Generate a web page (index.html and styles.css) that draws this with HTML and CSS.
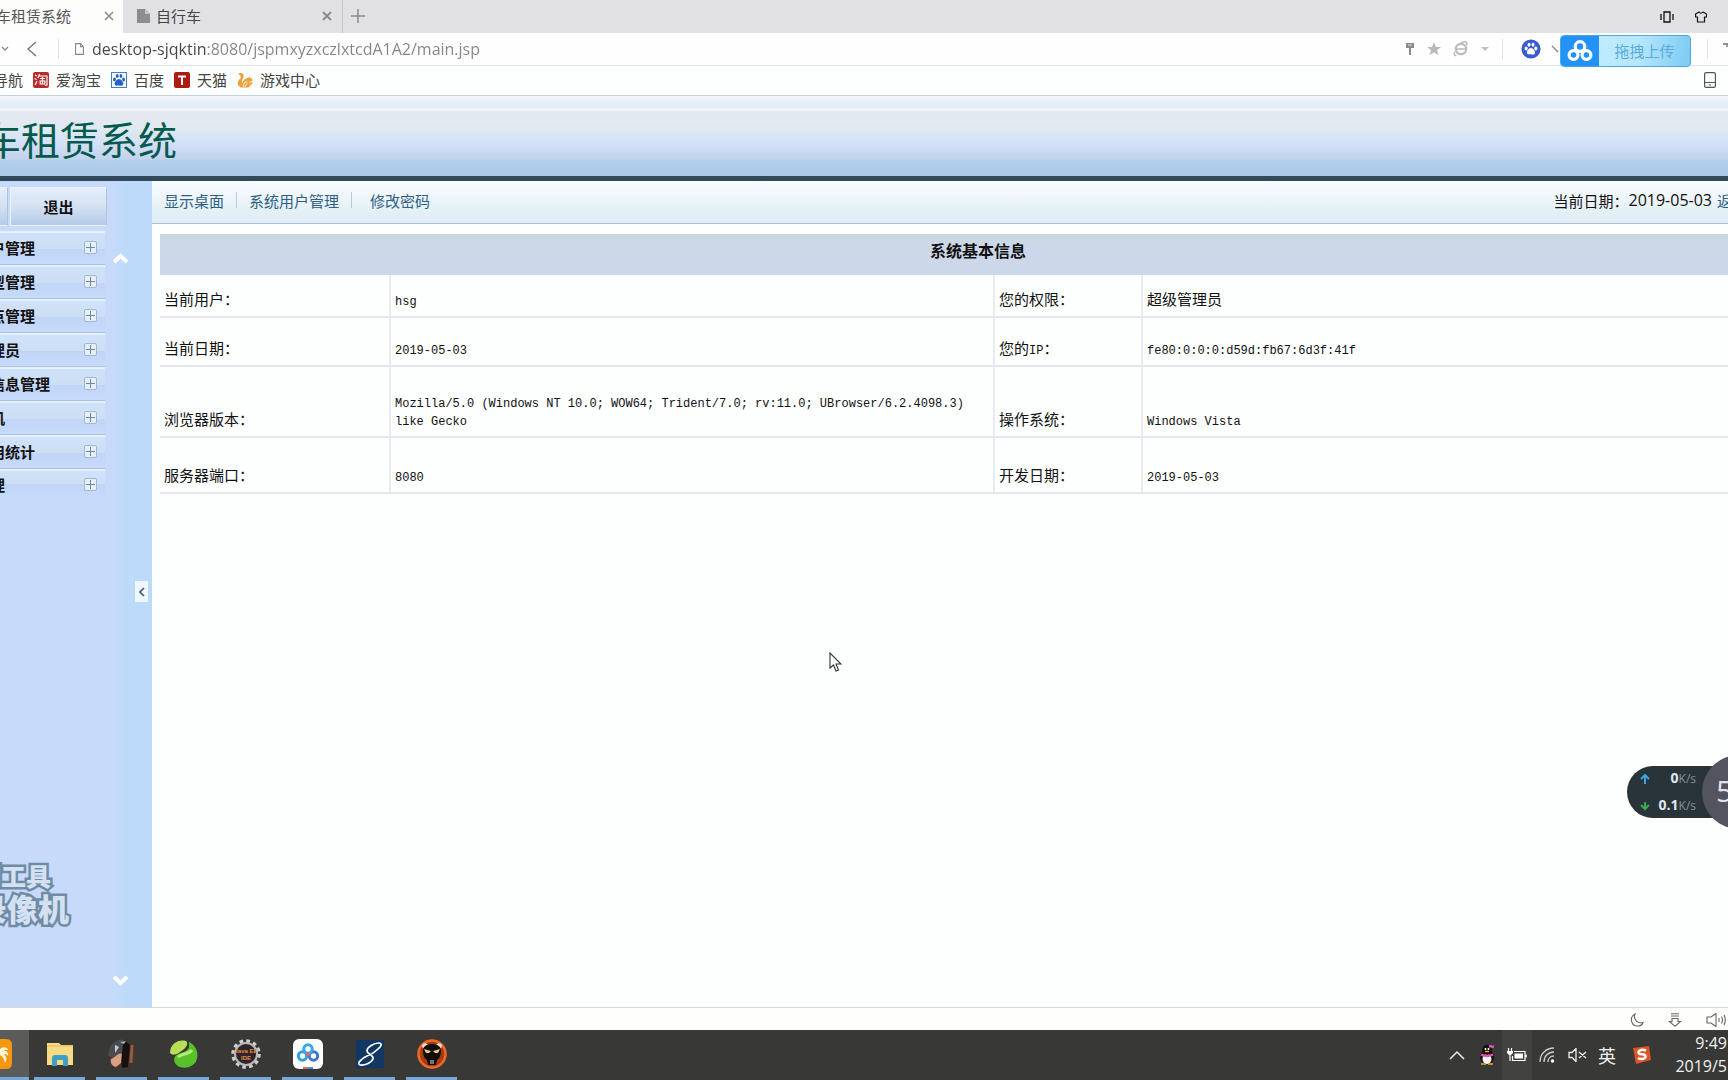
FILE: index.html
```html
<!DOCTYPE html>
<html lang="zh-CN">
<head>
<meta charset="utf-8">
<title>自行车租赁系统</title>
<link rel="stylesheet" href="styles.css">
</head>
<body>
<div class="screen">
  <div class="tabs">
    <div class="tab tab-active"><span class="tab-title">车租赁系统</span><button class="plain" aria-label="关闭"><svg width="12" height="12" viewBox="0 0 12 12"><path d="M2 2l8 8M10 2l-8 8" stroke="#888" stroke-width="1.5"/></svg></button></div>
    <div class="tab tab-idle"><svg width="13" height="14" viewBox="0 0 13 14"><path d="M0 0h8l5 5v9H0z" fill="#8e8e90"/><path d="M8 0v5h5" fill="#c8c8ca"/></svg><span class="tab-title">自行车</span><button class="plain" aria-label="关闭"><svg width="12" height="12" viewBox="0 0 12 12"><path d="M2 2l8 8M10 2l-8 8" stroke="#888" stroke-width="1.8"/></svg></button></div>
    <button class="plain new-tab" aria-label="新标签"><svg width="14" height="14" viewBox="0 0 14 14"><path d="M7 0v14M0 7h14" stroke="#8b8b8d" stroke-width="1.5"/></svg></button>
    <div class="tab-tools">
      <button class="plain" aria-label="侧栏"><svg width="14" height="12" viewBox="0 0 14 12"><path d="M4 1h6v10H4zM1 3v6M13 3v6" fill="none" stroke="#111" stroke-width="1.3"/></svg></button>
      <button class="plain" aria-label="皮肤"><svg width="12" height="12" viewBox="0 0 12 12"><path d="M4 1c1 1.500 3 1.500 4 0l3.500 2v3H9.500v5h-7V6H.6V3z" fill="none" stroke="#111" stroke-width="1.2" stroke-linejoin="round"/></svg></button>
    </div>
  </div>

  <div class="address">
    <button class="plain" aria-label="历史"><svg width="8" height="6" viewBox="0 0 8 6"><path d="M1 1l3 3 3-3" fill="none" stroke="#888" stroke-width="1.3"/></svg></button>
    <button class="plain back" aria-label="后退"><svg width="10" height="16" viewBox="0 0 10 16"><path d="M9 1L1 8l8 7" fill="none" stroke="#777" stroke-width="1.4"/></svg></button>
    <span class="rule"></span>
    <svg class="page-icon" width="9" height="12" viewBox="0 0 9 12"><path d="M.6.6h5l2.800 3v7.800H.6zM5.500.6v3h3" fill="none" stroke="#888" stroke-width="1.1"/></svg>
    <input class="url" aria-label="网址" value="desktop-sjqktin:8080/jspmxyzxczlxtcdA1A2/main.jsp">
    <div class="address-tools">
      <div class="marks">
        <svg width="10" height="14" viewBox="0 0 10 14"><path d="M1 1h8v5H1z" fill="#8b8b8b"/><path d="M3 3h4" stroke="#ddd"/><path d="M5 6v7" stroke="#8b8b8b" stroke-width="2"/></svg>
        <svg width="16" height="16" viewBox="0 0 16 16"><path d="M8 1l2 5h5l-4 3.200 1.500 5L8 11.200 3.500 14.200l1.500-5L1 6h5z" fill="#b9b9bb"/></svg>
        <svg width="16" height="16" viewBox="0 0 16 16"><circle cx="8" cy="8" r="5.200" fill="none" stroke="#bbb" stroke-width="2.200"/><path d="M4 8h8" stroke="#bbb" stroke-width="1.600"/><path d="M3.500 14.500c-3 .5-2.500-2-1.500-4M8 2c4-2 7-1.500 5.500 2.500" fill="none" stroke="#bbb" stroke-width="1.500"/></svg>
        <svg width="10" height="6" viewBox="0 0 10 6"><path d="M1 1h8L5 5z" fill="#c0c0c2"/></svg>
      </div>
      <span class="rule"></span>
      <svg class="paw" width="20" height="20" viewBox="0 0 20 20"><circle cx="10" cy="10" r="9.600" fill="#3a5cd0"/><g fill="#fff"><ellipse cx="5.200" cy="9.500" rx="1.500" ry="2"/><ellipse cx="8" cy="5.700" rx="1.500" ry="2"/><ellipse cx="12" cy="5.700" rx="1.500" ry="2"/><ellipse cx="14.800" cy="9.500" rx="1.500" ry="2"/><path d="M10 9c2 0 4.500 3 4 5s-2.500 1.500-4 1.300S6.500 16 6 14s2-5 4-5z"/></g></svg>
      <svg class="chevron" width="8" height="8" viewBox="0 0 8 8"><path d="M1 1l6 6" stroke="#888" stroke-width="1.400"/></svg>
      <span class="rule"></span>
      <svg class="edge" width="5" height="12" viewBox="0 0 5 12"><path d="M0 1h5M4 1v3" fill="none" stroke="#777" stroke-width="1.400"/></svg>
    </div>
  </div>

  <nav class="bookmarks">
    <a href="#">导航</a>
    <a href="#"><svg width="16" height="16" viewBox="0 0 16 16"><rect width="16" height="16" rx="2" fill="#b92b2b"/><path d="M2 3l2 1M1.500 6.500l2 1M2 13l2-4M6.500 2L5 6M6 4h8v9l-2 .5M7 6.500h5M6.500 9h6M9.500 5v7M7.200 9.500V12h4.600V9.500" fill="none" stroke="#fff" stroke-width="1.2"/></svg>爱淘宝</a>
    <a href="#"><svg width="16" height="16" viewBox="0 0 16 16"><rect x=".5" y=".5" width="15" height="15" fill="#f4f8ff" stroke="#4a7ec0"/><g fill="#2463c6"><ellipse cx="3.500" cy="7.500" rx="1.400" ry="1.900"/><ellipse cx="6.200" cy="4" rx="1.400" ry="1.900"/><ellipse cx="9.900" cy="4" rx="1.400" ry="1.900"/><ellipse cx="12.600" cy="7.500" rx="1.400" ry="1.900"/><path d="M8 7c2 0 5 3.500 4.200 5.600-.7 1.800-2.700 1-4.200.9s-3.500.9-4.200-.9C3 10.500 6 7 8 7z"/></g></svg>百度</a>
    <a href="#"><svg width="16" height="16" viewBox="0 0 16 16"><rect width="16" height="16" rx="2" fill="#ab1c12"/><path d="M4 4.500h8M8 4.500V13" stroke="#fff" stroke-width="2"/></svg>天猫</a>
    <a href="#"><svg width="16" height="16" viewBox="0 0 17 16"><path d="M1 2c3-3 7-1 6 3-1 2-3 4-1 6 1-4 4-5 6-5l1-2 1 2c2 0 3 2 2 3l-3 1c2 2 1 5-1 6H4c-4-2-4-6-1-9 2-2 1-4-2-5z" fill="#eda13a"/><path d="M14 10l3 1-3 3z" fill="#eda13a"/><path d="M7 15c0-4 1-5 4-5M9 15c0-2 1-3 2-3" fill="none" stroke="#fff"/></svg>游戏中心</a>
    <svg class="phone" width="12" height="16" viewBox="0 0 12 16"><rect x=".6" y=".6" width="10.800" height="14.800" rx="1.500" fill="none" stroke="#555" stroke-width="1.200"/><path d="M1 10.500h10M5 13h2" stroke="#555"/></svg>
  </nav>

  <header class="banner"><h1>车租赁系统</h1></header>

  <div class="workspace">
    <aside class="sidebar">
      <div class="menu">
        <div class="actions"><button class="action action-cut" aria-label="首页"></button><button class="action">退出</button></div>
        <button class="item">户管理<i class="plus"></i></button>
        <button class="item">型管理<i class="plus"></i></button>
        <button class="item">点管理<i class="plus"></i></button>
        <button class="item">理员<i class="plus"></i></button>
        <button class="item">信息管理<i class="plus"></i></button>
        <button class="item">机<i class="plus"></i></button>
        <button class="item">用统计<i class="plus"></i></button>
        <button class="item">理<i class="plus"></i></button>
      </div>
      <div class="rail">
        <svg class="rail-up" width="15" height="12" viewBox="0 0 15 12"><path d="M1 10l6.500-6 6.500 6" fill="none" stroke="#fff" stroke-width="4"/></svg>
        <button class="plain collapse" aria-label="收起"><svg width="6" height="10" viewBox="0 0 6 10"><path d="M5 1L1 5l4 4" fill="none" stroke="#456" stroke-width="1.600"/></svg></button>
        <svg class="rail-down" width="15" height="12" viewBox="0 0 15 12"><path d="M1 2l6.500 6L14 2" fill="none" stroke="#fff" stroke-width="4"/></svg>
      </div>
      <div class="watermark"><span class="mark-small">制工具</span><span class="mark-large">录像机</span></div>
    </aside>

    <main class="content">
      <nav class="subnav">
        <a href="#">显示桌面</a><span class="bar"></span><a href="#">系统用户管理</a><span class="bar"></span><a href="#" class="last">修改密码</a>
        <div class="today">当前日期：<span class="date">2019-05-03</span><a href="#">返</a></div>
      </nav>
      <table class="info">
        <colgroup><col class="c1"><col class="c2"><col class="c3"><col></colgroup>
        <thead><tr><th colspan="4">系统基本信息</th></tr></thead>
        <tbody>
          <tr class="r1"><td>当前用户：</td><td><span class="code">hsg</span></td><td>您的权限：</td><td>超级管理员</td></tr>
          <tr class="r2"><td>当前日期：</td><td><span class="code">2019-05-03</span></td><td>您的<span class="code">IP</span>：</td><td><span class="code">fe80:0:0:0:d59d:fb67:6d3f:41f</span></td></tr>
          <tr class="r3"><td>浏览器版本：</td><td><span class="code">Mozilla/5.0 (Windows NT 10.0; WOW64; Trident/7.0; rv:11.0; UBrowser/6.2.4098.3)<br>like Gecko</span></td><td>操作系统：</td><td><span class="code">Windows Vista</span></td></tr>
          <tr class="r4"><td>服务器端口：</td><td><span class="code">8080</span></td><td>开发日期：</td><td><span class="code">2019-05-03</span></td></tr>
        </tbody>
      </table>
    </main>
  </div>

  <div class="status">
    <svg width="14" height="14" viewBox="0 0 14 14"><path d="M5 1C-1 4 1 13 7.500 13c3 0 5-1.500 5.500-3.500C7 11 3 6 5 1z" fill="none" stroke="#666" stroke-width="1.100"/></svg>
    <svg width="14" height="14" viewBox="0 0 14 14"><path d="M3 .7h8M3 3h8M4 5.500h6v3h2.500L7 13.300 1.500 8.500H4z" fill="none" stroke="#666" stroke-width="1.100"/></svg>
    <svg width="20" height="14" viewBox="0 0 20 14"><path d="M1 4h4l5-3.500v13L5 10H1zM13 5v4M15.500 3.500q2 3.500 0 7M18 2q2.500 5 0 10" fill="none" stroke="#666" stroke-width="1.100"/></svg>
  </div>

  <footer class="taskbar">
    <button class="task task-first" aria-label="UC浏览器"><svg width="12" height="30" viewBox="0 0 12 30"><path d="M0 0h6q6 0 6 6v18q0 6-6 6H0z" fill="#f7970f"/><path d="M0 10c3-3 8-2 8 1H3c4 1 6 3 5 6-1-2-3-2-4-2 3 3 3 6 1 9-1-4-2-6-5-8z" fill="#fff3d8"/></svg></button>
    <button class="task" aria-label="资源管理器"><svg width="28" height="24" viewBox="0 0 28 24"><path d="M1 1h12l2 2h12v20H1z" fill="#f7dc85"/><path d="M1 4h26" stroke="#e5b84a"/><path d="M6 24v-8q0-3 3-3h10q3 0 3 3v8h-5v-6h-6v6z" fill="#3ea0c4"/></svg></button>
    <button class="task" aria-label="用户头像"><svg width="30" height="30" viewBox="0 0 30 30"><circle cx="15" cy="15" r="14.500" fill="#46352c"/><path d="M3 8C7 2 13-1 17 1l-1 14-10 4-5-2z" fill="#4b4c50"/><path d="M4 20c5-2 8-7 11-5l-1 9-5 4C5 27 3 24 4 20z" fill="#d9a084"/><path d="M17 1c-2 9-3 18-2 28l6-1 2-22z" fill="#17100e"/><path d="M25 6l-1 18" stroke="#8a5f42" stroke-width="3"/><path d="M8 6l4 2-4 6z" fill="#c5ccd4"/><path d="M13 3l6-1-2 3z" fill="#a9b5ba"/></svg></button>
    <button class="task" aria-label="绿色软件"><svg width="28" height="30" viewBox="0 0 28 30"><path d="M0 14C0 5 8 0 16 2c3 2 0 7-3 9C9 14 4 18 0 14z" fill="#b8de55"/><path d="M4 20c2-7 9-5 13-9 3-2 2-5 2-8 9 4 11 16 5 22-6 6-20 5-20-5z" fill="#58c029"/><path d="M8 18c4-4 10-2 14-7" stroke="#b0ee75" stroke-width="3" fill="none"/></svg></button>
    <button class="task" aria-label="Java EE IDE"><svg width="30" height="30" viewBox="0 0 30 30"><circle cx="15" cy="15" r="13" fill="none" stroke="#cfcfd0" stroke-width="3.500" stroke-dasharray="3.600 3.200"/><circle cx="15" cy="15" r="11" fill="#30232a" stroke="#b9b9bc" stroke-width="2"/><text x="15" y="14" text-anchor="middle" class="ide">Java EE</text><text x="15" y="21" text-anchor="middle" class="ide">IDE</text></svg></button>
    <button class="task" aria-label="百度网盘"><svg width="30" height="30" viewBox="0 0 30 30"><rect width="30" height="30" rx="6" fill="#fdfdfe"/><g fill="none" stroke-width="3"><circle cx="9.500" cy="17" r="4.200" stroke="#2f9fe0"/><circle cx="20.500" cy="17" r="4.200" stroke="#4076cf"/><circle cx="15" cy="10" r="4.200" stroke="#38a7e5"/><path d="M13 14l2 2 2-2" stroke="#e56a6a" stroke-width="2"/></g><path d="M10 29h5" stroke="#e46c5c" stroke-width="2"/><path d="M15 29h5" stroke="#4a90d8" stroke-width="2"/></svg></button>
    <button class="task" aria-label="录像软件"><svg width="28" height="28" viewBox="0 0 28 28"><path d="M0 0h28v28H0z" fill="#123762"/><path d="M22 9c4-3 4-6 1-6-5 0-12 4-12 8 0 3 7 4 6 8-1 3-8 7-13 6-4-1 2-7 7-9 6-2 8-4 11-7z" fill="none" stroke="#fff" stroke-width="1.700"/></svg></button>
    <button class="task" aria-label="熊猫录屏"><svg width="30" height="30" viewBox="0 0 30 30"><circle cx="15" cy="15" r="13.500" fill="#a63c12" stroke="#ee6923" stroke-width="2.500"/><circle cx="8" cy="7" r="2.800" fill="#f2ded2"/><circle cx="22" cy="7" r="2.800" fill="#f2ded2"/><path d="M6 12c0-5 4-7 9-7s9 2 9 7-2 8-4 9l-1 5h-8l-1-5c-2-1-4-4-4-9z" fill="#120e0d"/><path d="M7 10l7 2-2 2H9zM23 10l-7 2 2 2h3z" fill="#eac293"/><path d="M12 21h6v4h-6z" fill="#120e0d"/><path d="M14 21v4M16 21v4" stroke="#e9d6c8"/></svg></button>
    <div class="tray">
      <span class="cell"><svg width="16" height="10" viewBox="0 0 16 10"><path d="M1 9l7-7 7 7" fill="none" stroke="#eee" stroke-width="1.500"/></svg></span>
      <span class="cell"><svg width="18" height="20" viewBox="0 0 18 20"><ellipse cx="9" cy="12" rx="7" ry="7" fill="#111"/><ellipse cx="9" cy="14" rx="4.500" ry="5" fill="#fff"/><circle cx="9" cy="5" r="5" fill="#111"/><circle cx="7.500" cy="4" r="1" fill="#fff"/><circle cx="10.500" cy="4" r="1" fill="#fff"/><path d="M7 6.500h4" stroke="#f5a623" stroke-width="1.500"/><path d="M3 9.500q6 3 12 0M11 1l5 1" stroke="#ef4fb0" stroke-width="2.500" fill="none"/><path d="M3 19h5M10 19h5" stroke="#f5a623" stroke-width="1.500"/></svg></span>
      <span class="cell cell-hot"><svg width="20" height="14" viewBox="0 0 20 14"><path d="M7 3.500h11v9H5.500V8" fill="none" stroke="#fff" stroke-width="1.200"/><path d="M7.500 5.500h8.500v5H7.500z" fill="#fff"/><path d="M19 6.500v3" stroke="#fff" stroke-width="1.500"/><path d="M1.500 0v3M4.500 0v3M3 6v7" stroke="#fff" stroke-width="1.200"/><path d="M0 3h6v2L4 7H2L0 5z" fill="#fff"/></svg></span>
      <span class="cell"><svg width="16" height="16" viewBox="0 0 16 16"><path d="M1 15C1 7 7 1 15 1M5 15c0-6 4-10 10-10M9 15c0-3 2-6 6-6" fill="none" stroke="#ccc" stroke-width="1.300"/><circle cx="13.500" cy="14" r="1.700" fill="#fff"/></svg></span>
      <span class="cell"><svg width="19" height="14" viewBox="0 0 19 14"><path d="M1 4.500h3l4-4v13l-4-4H1zM11 4l7 6M18 4l-7 6" fill="none" stroke="#eee" stroke-width="1.300"/></svg></span>
      <span class="cell lang">英</span>
      <span class="cell cell-wide"><svg width="20" height="20" viewBox="0 0 20 20"><path d="M1 3l16-2 2 14-15 4z" fill="#df5426"/><path d="M14 5.500C9 3.500 5 6 7 8.500c2 1.500 6 0 6.500 2.500S9 15 6 13" fill="none" stroke="#fff" stroke-width="2.500"/></svg></span>
      <div class="clock"><time>9:49</time><time>2019/5</time></div>
    </div>
  </footer>

  <button class="upload"><span class="upload-logo"><svg width="26" height="22" viewBox="0 0 26 22"><g fill="none" stroke="#fff" stroke-width="3.200"><circle cx="6.500" cy="15" r="4.400"/><circle cx="19.500" cy="15" r="4.400"/><circle cx="13" cy="6.500" r="4.800"/></g></svg></span><span class="upload-text">拖拽上传</span></button>

  <div class="meter">
    <div class="speeds">
      <svg width="10" height="10" viewBox="0 0 10 10"><path d="M5 10V1M1 5l4-4 4 4" fill="none" stroke="#3aa5de" stroke-width="2"/></svg><span class="speed"><b>0</b>K/s</span>
      <svg width="10" height="10" viewBox="0 0 10 10"><path d="M5 1v7M1 4l4 4 4-4" fill="none" stroke="#38ab4f" stroke-width="2"/></svg><span class="speed"><b>0.1</b>K/s</span>
    </div>
    <div class="ball">5</div>
  </div>

  <svg class="pointer" width="13" height="20" viewBox="0 0 13 20"><path d="M1 1v15l3.500-3 2.500 6 2.500-1-2.500-6h5z" fill="#fff" stroke="#333" stroke-width="1.100"/></svg>
</div>
</body>
</html>
```
FILE: styles.css
```css
* { box-sizing: border-box; }
body { margin: 0; font-family: "Open Sans", "Noto Sans CJK SC", sans-serif; font-size: 15px; color: #111; }
a { color: inherit; text-decoration: none; }
svg { flex: none; display: block; }
button { font: inherit; color: inherit; padding: 0; border: 0; cursor: pointer; }
.plain { background: none; display: flex; align-items: center; justify-content: center; }
.screen { position: relative; min-height: 100vh; display: flex; flex-direction: column; overflow: hidden; background: #fdfefe; white-space: nowrap; }
.rule { width: 1px; height: 20px; background: #e3e3e5; }

/* browser chrome */
.tabs { display: flex; height: 33px; background: #e1e1e4; color: #555; }
.tab { display: flex; align-items: center; height: 33px; padding-bottom: 2px; }
.tab .plain { margin-left: auto; }
.tab-active { width: 127px; margin-left: -4px; padding-right: 8px; background: #fdfdfc; }
.tab-idle { width: 220px; padding: 0 9px 2px 14px; gap: 6px; color: #444; border-right: 1px solid #c6c6ca; }
.new-tab { width: 29px; padding-bottom: 2px; }
.tab-tools { margin-left: auto; display: flex; align-items: center; gap: 21px; padding-right: 21px; }
.address { display: flex; align-items: center; height: 33px; border-bottom: 1px solid #e4e6ea; background: #fefefe; padding-left: 1px; }
.back { width: 30px; margin: 0 11px 0 8px; }
.page-icon { margin: 0 8px 0 16px; }
.url { flex: 1; height: 28px; border: 0; padding: 0; outline: 0; font: 16px "Open Sans", sans-serif; color: transparent; background: linear-gradient(to right, #444 115px, #858585 115px); -webkit-background-clip: text; background-clip: text; }
.address-tools { display: flex; align-items: center; gap: 14px; }
.marks { display: flex; align-items: center; gap: 11px; margin-right: -2px; }
.edge { margin: 0 0 0 1px; }
.chevron + .rule { margin-left: 134px; }
.paw { margin-left: 4px; }
.chevron { margin-left: -4px; }
.bookmarks { display: flex; align-items: center; gap: 10px; height: 29px; margin-left: -7px; padding: 0 12px 2px 0; background: #fdfefe; color: #444; line-height: 20px; }
.bookmarks a { display: flex; align-items: center; gap: 7px; }
.phone { margin-left: auto; }

/* page banner */
.banner { height: 86px; border-top: 1px solid #c4cfd8; border-bottom: 5px solid #32495c; display: flex; align-items: center; padding-top: 8px;
  background: linear-gradient(#f2f6fb 0, #e3ebf5 12px, #f4f8fc 13px, #e5e9f2 16px, #e0e9ef 33px, #d3e0f7 47px, #c3d3ec 63px, #b3cfec 64px, #abcae8 79px); }
.banner h1 { margin: 0 0 0 -18px; font-size: 39px; line-height: 48px; font-weight: 400; color: #06594f; }

.workspace { flex: 1; display: flex; min-height: 0; }
.sidebar { position: relative; width: 152px; display: flex; background: linear-gradient(to right, #c8dafa 0, #c8dafa 108px, #bddafb 126px, #bddafb 100%); }
.menu { width: 107px; padding-top: 6px; }
.actions { display: flex; gap: 2px; height: 39px; margin-bottom: 5px; }
.action { flex: 1; font-weight: 700; border: 1px solid #e9f1fc; border-right-color: #aec3dc; background: linear-gradient(#e5effb, #d3e1f2 50%, #b5cbe6); }
.action-cut { flex: none; width: 8px; border-left: 0; }
.item { display: flex; width: 105px; height: 34px; align-items: center; justify-content: space-between; font-weight: 700; text-indent: -10px; padding: 0 8px 2px 0;
  border-top: 2px solid #e5f0fd; border-bottom: 1px solid #acc3de; background: linear-gradient(#cfe2fb, #cddff3 50%, #c1d5f7 52%, #c6dafa); }
.item:last-child { height: 28px; padding-bottom: 0; border-bottom: 0; }
.plus { width: 13px; height: 13px; border: 1px solid #a4b6cb; border-radius: 2px; background: linear-gradient(#6f88a5, #6f88a5) center / 9px 1px no-repeat, linear-gradient(#6f88a5, #6f88a5) center / 1px 9px no-repeat, #e5effa; }
.rail { flex: 1; display: flex; flex-direction: column; justify-content: space-between; padding: 71px 4px 20px 6px; }
.collapse { align-self: flex-end; width: 13px; height: 21px; background: #eef6fe; margin-bottom: 56px; }
.watermark { position: absolute; left: -24px; bottom: 81px; display: flex; flex-direction: column; font-weight: 900; color: #d3e1f3; -webkit-text-stroke: 5px #708ca5; paint-order: stroke fill; }
.mark-small { font-size: 25px; line-height: 32px; }
.mark-large { font-size: 31px; line-height: 34px; }

/* main area */
.content { flex: 1; min-width: 0; }
.subnav { display: flex; align-items: center; height: 43px; padding: 0 0 4px 12px; color: #2d5f86; border-bottom: 1px solid #a9c1d3; background: linear-gradient(#f8fdfe, #edf4fa 45%, #e2f0f4 75%, #e2ecf8); }
.bar { width: 1px; height: 16px; margin: 0 12px; background: #b9cbd8; }
.last { margin-left: 6px; }
.today { display: flex; align-items: center; margin: 0 -4px 0 auto; color: #111; }
.today a { color: #2d5f86; }
.date { font-size: 16px; margin-right: 5px; }
.info { width: calc(100% - 8px); margin: 10px 0 0 8px; border-collapse: collapse; table-layout: fixed; color: #111; font-family: "Liberation Mono", "Noto Sans CJK SC", monospace; }
.c1 { width: 230px; }
.c2 { width: 604px; }
.c3 { width: 148px; }
.info th { height: 41px; padding: 0 0 4px 68px; font-size: 16px; line-height: 20px; background: linear-gradient(#cad8e2, #ccd8ea 40%); }
.info td { padding: 0 0 5px 4px; line-height: 18px; vertical-align: bottom; border-bottom: 2px solid #e3e6ea; border-right: 2px solid #e8ebf2; }
.info td:last-child { border-right: 0; }
.code { font-size: 12px; }
.r1 { height: 42px; }
.r2 { height: 49px; }
.r3 { height: 71px; }
.r4 { height: 56px; }

.status { height: 23px; display: flex; align-items: center; justify-content: flex-end; gap: 24px; padding: 2px 2px 0 0; border-top: 1px solid #d5d7d9; background: #fefefd; }

/* desktop taskbar */
.taskbar { height: 50px; display: flex; gap: 11px; background: #383836; color: #f2f2f2; }
.task { width: 51px; display: flex; align-items: center; justify-content: center; background: none; border-bottom: 3px solid #76a7d8; }
.task-first { width: 29px; margin-right: -6px; justify-content: flex-start; background: #5b5b5a; }
.ide { font: 700 6px "Liberation Sans", sans-serif; fill: #e58b43; }
.tray { display: flex; margin-left: auto; }
.cell { width: 30px; display: flex; align-items: center; justify-content: center; }
.cell-wide { width: 40px; }
.cell-hot { background: #424241; }
.lang { font-size: 18px; }
.clock { width: 66px; display: flex; flex-direction: column; align-items: flex-end; padding: 2px 1px 0 0; font-size: 16px; line-height: 23px; }

/* floating overlays */
.upload { position: absolute; top: 35px; right: 37px; width: 131px; height: 32px; display: flex; border: 1px solid #4ba8e4; border-radius: 4px; overflow: hidden; background: linear-gradient(100deg, #c9efff, #b5e7fd 60%, #7ccaf3); }
.upload-logo { width: 38px; height: 30px; display: flex; align-items: center; justify-content: center; background: #2292f7; }
.upload-text { flex: 1; align-self: center; line-height: 30px; color: #5cabdd; }
.meter { position: absolute; top: 755px; right: 0; width: 101px; height: 74px; display: flex; align-items: center; overflow: hidden; }
.speeds { width: 101px; height: 52px; display: grid; grid-template-columns: 10px 44px; align-content: center; align-items: center; gap: 6px 2px; padding-left: 13px; border-radius: 26px 0 0 26px; background: #29343a; color: #83909a; }
.speed { text-align: right; font-size: 12px; line-height: 20px; }
.speed b { font-size: 14px; color: #e1e8ef; }
.ball { position: absolute; left: 75px; width: 74px; height: 74px; border-radius: 50%; padding-left: 14px; font-size: 30px; line-height: 72px; background: #53545f; color: #e1e1e8; }
.pointer { position: absolute; left: 829px; top: 652px; }
```
